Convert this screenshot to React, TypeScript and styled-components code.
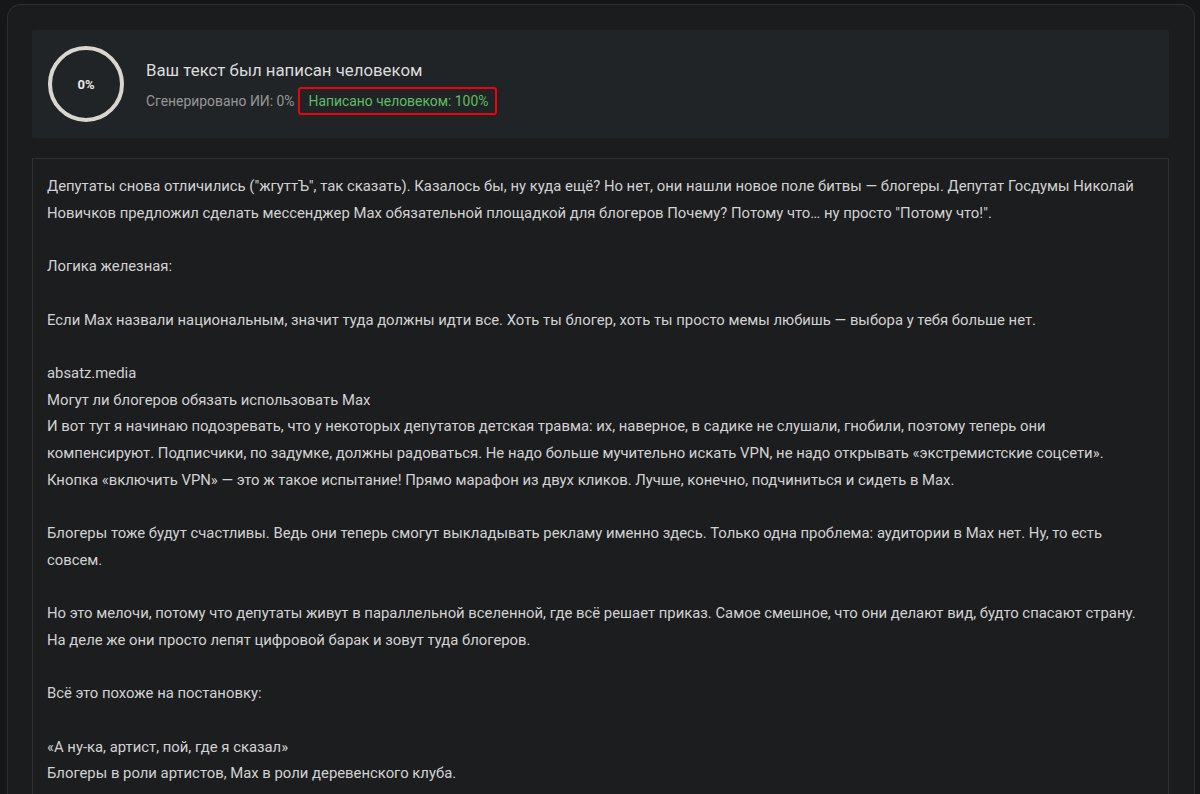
import styled, { createGlobalStyle } from 'styled-components';

const GlobalStyle = createGlobalStyle`
  html, body {
    margin: 0;
    padding: 0;
    background: #161719;
    font-family: Roboto, "Liberation Sans", sans-serif;
    overflow: hidden;
  }
`;

const Page = styled.div`
  height: 794px;
  padding: 4px 5px 0 7px;
  box-sizing: border-box;
`;

const Card = styled.div`
  height: 100%;
  box-sizing: border-box;
  background: #1b1c1e;
  border: 1px solid #2c2e31;
  border-bottom: none;
  border-radius: 14px 14px 0 0;
  padding: 25px 25px 0 24px;
  display: flex;
  flex-direction: column;
  gap: 20px;
`;

const ResultPanel = styled.div`
  height: 108px;
  background: #212427;
  display: flex;
  align-items: center;
  padding: 0 16px;
  gap: 22px;
  border-radius: 2px;
`;

const Ring = styled.div`
  width: 68px;
  height: 68px;
  border-radius: 50%;
  border: 4px solid #d9d6cf;
  display: flex;
  align-items: center;
  justify-content: center;
  color: #e8e8e8;
  font-size: 13px;
  font-weight: 700;
  flex-shrink: 0;
`;

const Info = styled.div`
  display: flex;
  flex-direction: column;
  gap: 5px;
  padding-top: 4px;
`;

const Title = styled.div`
  font-size: 16.8px;
  color: #dcdcdc;
  line-height: 24px;
`;

const Stats = styled.div`
  display: flex;
  align-items: center;
  gap: 3px;
  font-size: 13.9px;
  color: #969696;
`;

const Highlight = styled.span`
  color: #5fbd63;
  border: 2px solid #e8060c;
  border-radius: 3px;
  padding: 4px 7px 4px 9px;
  line-height: 16px;
`;

const TextPanel = styled.div`
  flex: 1;
  background: #1c1d1f;
  border: 1px solid #2f3134;
  border-bottom: none;
  padding: 14px 15px 0 14px;
  color: #d2d2d2;
  font-size: 14.85px;
  line-height: 26.7px;
  white-space: pre-wrap;
  overflow: hidden;
`;

const text = `Депутаты снова отличились ("жгуттЪ", так сказать). Казалось бы, ну куда ещё? Но нет, они нашли новое поле битвы — блогеры. Депутат Госдумы Николай Новичков предложил сделать мессенджер Max обязательной площадкой для блогеров Почему? Потому что… ну просто "Потому что!".

Логика железная:

Если Max назвали национальным, значит туда должны идти все. Хоть ты блогер, хоть ты просто мемы любишь — выбора у тебя больше нет.

absatz.media
Могут ли блогеров обязать использовать Max
И вот тут я начинаю подозревать, что у некоторых депутатов детская травма: их, наверное, в садике не слушали, гнобили, поэтому теперь они компенсируют. Подписчики, по задумке, должны радоваться. Не надо больше мучительно искать VPN, не надо открывать «экстремистские соцсети». Кнопка «включить VPN» — это ж такое испытание! Прямо марафон из двух кликов. Лучше, конечно, подчиниться и сидеть в Max.

Блогеры тоже будут счастливы. Ведь они теперь смогут выкладывать рекламу именно здесь. Только одна проблема: аудитории в Max нет. Ну, то есть совсем.

Но это мелочи, потому что депутаты живут в параллельной вселенной, где всё решает приказ. Самое смешное, что они делают вид, будто спасают страну. На деле же они просто лепят цифровой барак и зовут туда блогеров.

Всё это похоже на постановку:

«А ну-ка, артист, пой, где я сказал»
Блогеры в роли артистов, Max в роли деревенского клуба.

`;

export default function App() {
  return (
    <>
      <GlobalStyle />
      <Page>
        <Card>
          <ResultPanel>
            <Ring>0%</Ring>
            <Info>
              <Title>Ваш текст был написан человеком</Title>
              <Stats>
                <span>Сгенерировано ИИ: 0%</span>
                <Highlight>Написано человеком: 100%</Highlight>
              </Stats>
            </Info>
          </ResultPanel>
          <TextPanel>{text}</TextPanel>
        </Card>
      </Page>
    </>
  );
}
